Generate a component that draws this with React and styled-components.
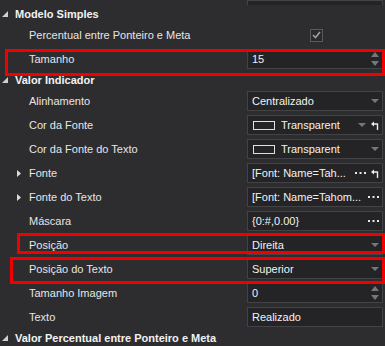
import styled, { createGlobalStyle } from "styled-components";

const GlobalStyle = createGlobalStyle`
    html, body {
        margin: 0;
        padding: 0;
        background: #2d2d30;
    }
`;

const Grid = styled.div`
    position: relative;
    width: 385px;
    height: 346px;
    overflow: hidden;
    background: #2d2d30;
    font-family: "Liberation Sans", Arial, sans-serif;
    font-size: 11px;
    color: #e6e6e6;
`;

const Row = styled.div`
    display: grid;
    grid-template-columns: 247px 136px;
    align-items: center;
    height: ${(p) => p.$h || 24}px;
`;

const PartialRow = styled(Row)`
    align-items: end;
    overflow: hidden;
`;

const CategoryRow = styled.div`
    display: flex;
    align-items: center;
    height: 18px;
    gap: 7px;
    padding-left: 2px;
    font-weight: bold;
    color: #f2f2f2;
    white-space: nowrap;
`;

const Name = styled.div`
    display: flex;
    align-items: center;
    padding-left: ${(p) => (p.$expandable ? 17 : 29)}px;
    gap: 8px;
    white-space: nowrap;
`;

const Editor = styled.div`
    box-sizing: border-box;
    height: ${(p) => p.$h || 20}px;
    margin-bottom: ${(p) => p.$mb || 0}px;
    display: flex;
    align-items: center;
    gap: 4px;
    padding: 0 3px 0 4px;
    background: #242426;
    border: 1px solid #434346;
    color: #f2f2f2;
    white-space: nowrap;
    overflow: hidden;
`;

const Value = styled.span`
    flex: 1;
    overflow: hidden;
`;

const Centered = styled.div`
    display: flex;
    justify-content: center;
    padding-left: 2px;
`;

const Check = styled.div`
    box-sizing: border-box;
    width: 13px;
    height: 13px;
    border: 1px solid #5a5a5c;
    background: #2a2a2c;
    display: flex;
    align-items: center;
    justify-content: center;
`;

const Swatch = styled.span`
    box-sizing: border-box;
    width: 22px;
    height: 9px;
    border: 1px solid #e0e0e0;
    margin-right: 2px;
    margin-left: 1px;
`;

const IconSlot = styled.span`
    display: flex;
    align-items: center;
    justify-content: center;
    width: ${(p) => p.$w || 9}px;
`;

const Spin = styled.span`
    display: flex;
    flex-direction: column;
    justify-content: space-between;
    height: 14px;
    width: 9px;
    align-items: center;
`;

const Marker = styled.div`
    position: absolute;
    box-sizing: border-box;
    border: 3px solid #f00000;
    pointer-events: none;
    left: ${(p) => p.$l}px;
    top: ${(p) => p.$t}px;
    width: ${(p) => p.$w}px;
    height: ${(p) => p.$h}px;
`;

function Collapse() {
    return (
        <svg width="6" height="6" viewBox="0 0 6 6">
            <path d="M6 0 V6 H0 Z" fill="#cfcfcf" />
        </svg>
    );
}

function Expand() {
    return (
        <svg width="4" height="7" viewBox="0 0 4 7">
            <path d="M0 0 L4 3.5 L0 7 Z" fill="#dcdcdc" />
        </svg>
    );
}

function Arrow() {
    return (
        <svg width="8" height="4" viewBox="0 0 8 4">
            <path d="M0 0 H8 L4 4 Z" fill="#77777a" />
        </svg>
    );
}

function SpinUp() {
    return (
        <svg width="8" height="5" viewBox="0 0 8 5">
            <path d="M0 5 H8 L4 0 Z" fill="#77777a" />
        </svg>
    );
}

function SpinDown() {
    return (
        <svg width="8" height="5" viewBox="0 0 8 5">
            <path d="M0 0 H8 L4 5 Z" fill="#77777a" />
        </svg>
    );
}

function Reset() {
    return (
        <svg width="8" height="9" viewBox="0 0 8 9">
            <path d="M0 3 L3 0.5 V5.5 Z" fill="#eaeaea" />
            <path d="M3 3 H6.5 V9" stroke="#eaeaea" strokeWidth="1.4" fill="none" />
        </svg>
    );
}

function Dots() {
    return (
        <svg width="11" height="2" viewBox="0 0 11 2">
            <rect x="0" y="0" width="2" height="2" fill="#eaeaea" />
            <rect x="4.5" y="0" width="2" height="2" fill="#eaeaea" />
            <rect x="9" y="0" width="2" height="2" fill="#eaeaea" />
        </svg>
    );
}

function Tick() {
    return (
        <svg width="9" height="8" viewBox="0 0 9 8">
            <path d="M1 4 L3.5 6.5 L8 1" stroke="#a0a0a3" strokeWidth="1.6" fill="none" />
        </svg>
    );
}

function Category({ children }) {
    return (
        <CategoryRow>
            <Collapse />
            {children}
        </CategoryRow>
    );
}

function Prop({ name, expandable, children }) {
    return (
        <Row>
            <Name $expandable={expandable}>
                {expandable && <Expand />}
                {name}
            </Name>
            {children}
        </Row>
    );
}

function TextBox({ value, children }) {
    return (
        <Editor>
            <Value>{value}</Value>
            {children}
        </Editor>
    );
}

function Combo({ value, reset }) {
    return (
        <TextBox value={value}>
            <IconSlot><Arrow /></IconSlot>
            {reset && <IconSlot><Reset /></IconSlot>}
        </TextBox>
    );
}

function Number({ value }) {
    return (
        <TextBox value={value}>
            <Spin><SpinUp /><SpinDown /></Spin>
        </TextBox>
    );
}

function ColorBox({ reset }) {
    return (
        <Editor>
            <Swatch />
            <Value>Transparent</Value>
            <IconSlot><Arrow /></IconSlot>
            {reset && <IconSlot><Reset /></IconSlot>}
        </Editor>
    );
}

function Ellipsis({ value, reset }) {
    return (
        <TextBox value={value}>
            <IconSlot $w={12}><Dots /></IconSlot>
            {reset && <IconSlot><Reset /></IconSlot>}
        </TextBox>
    );
}

export default function App() {
    return (
        <>
            <GlobalStyle />
            <Grid>
                <PartialRow $h={5}>
                    <span />
                    <Editor $mb={2} />
                </PartialRow>

                <Category>Modelo Simples</Category>
                <Prop name="Percentual entre Ponteiro e Meta">
                    <Centered>
                        <Check><Tick /></Check>
                    </Centered>
                </Prop>
                <Prop name="Tamanho">
                    <Number value="15" />
                </Prop>

                <Category>Valor Indicador</Category>
                <Prop name="Alinhamento">
                    <Combo value="Centralizado" />
                </Prop>
                <Prop name="Cor da Fonte">
                    <ColorBox reset />
                </Prop>
                <Prop name="Cor da Fonte do Texto">
                    <ColorBox />
                </Prop>
                <Prop name="Fonte" expandable>
                    <Ellipsis value="[Font: Name=Tah..." reset />
                </Prop>
                <Prop name="Fonte do Texto" expandable>
                    <Ellipsis value="[Font: Name=Tahom..." />
                </Prop>
                <Prop name="Máscara">
                    <Ellipsis value="{0:#,0.00}" />
                </Prop>
                <Prop name="Posição">
                    <Combo value="Direita" />
                </Prop>
                <Prop name="Posição do Texto">
                    <Combo value="Superior" />
                </Prop>
                <Prop name="Tamanho Imagem">
                    <Number value="0" />
                </Prop>
                <Prop name="Texto">
                    <TextBox value="Realizado" />
                </Prop>

                <Category>Valor Percentual entre Ponteiro e Meta</Category>

                <Marker $l={5} $t={49} $w={380} $h={27} />
                <Marker $l={17} $t={233} $w={368} $h={21} />
                <Marker $l={10} $t={257} $w={375} $h={27} />
            </Grid>
        </>
    );
}
